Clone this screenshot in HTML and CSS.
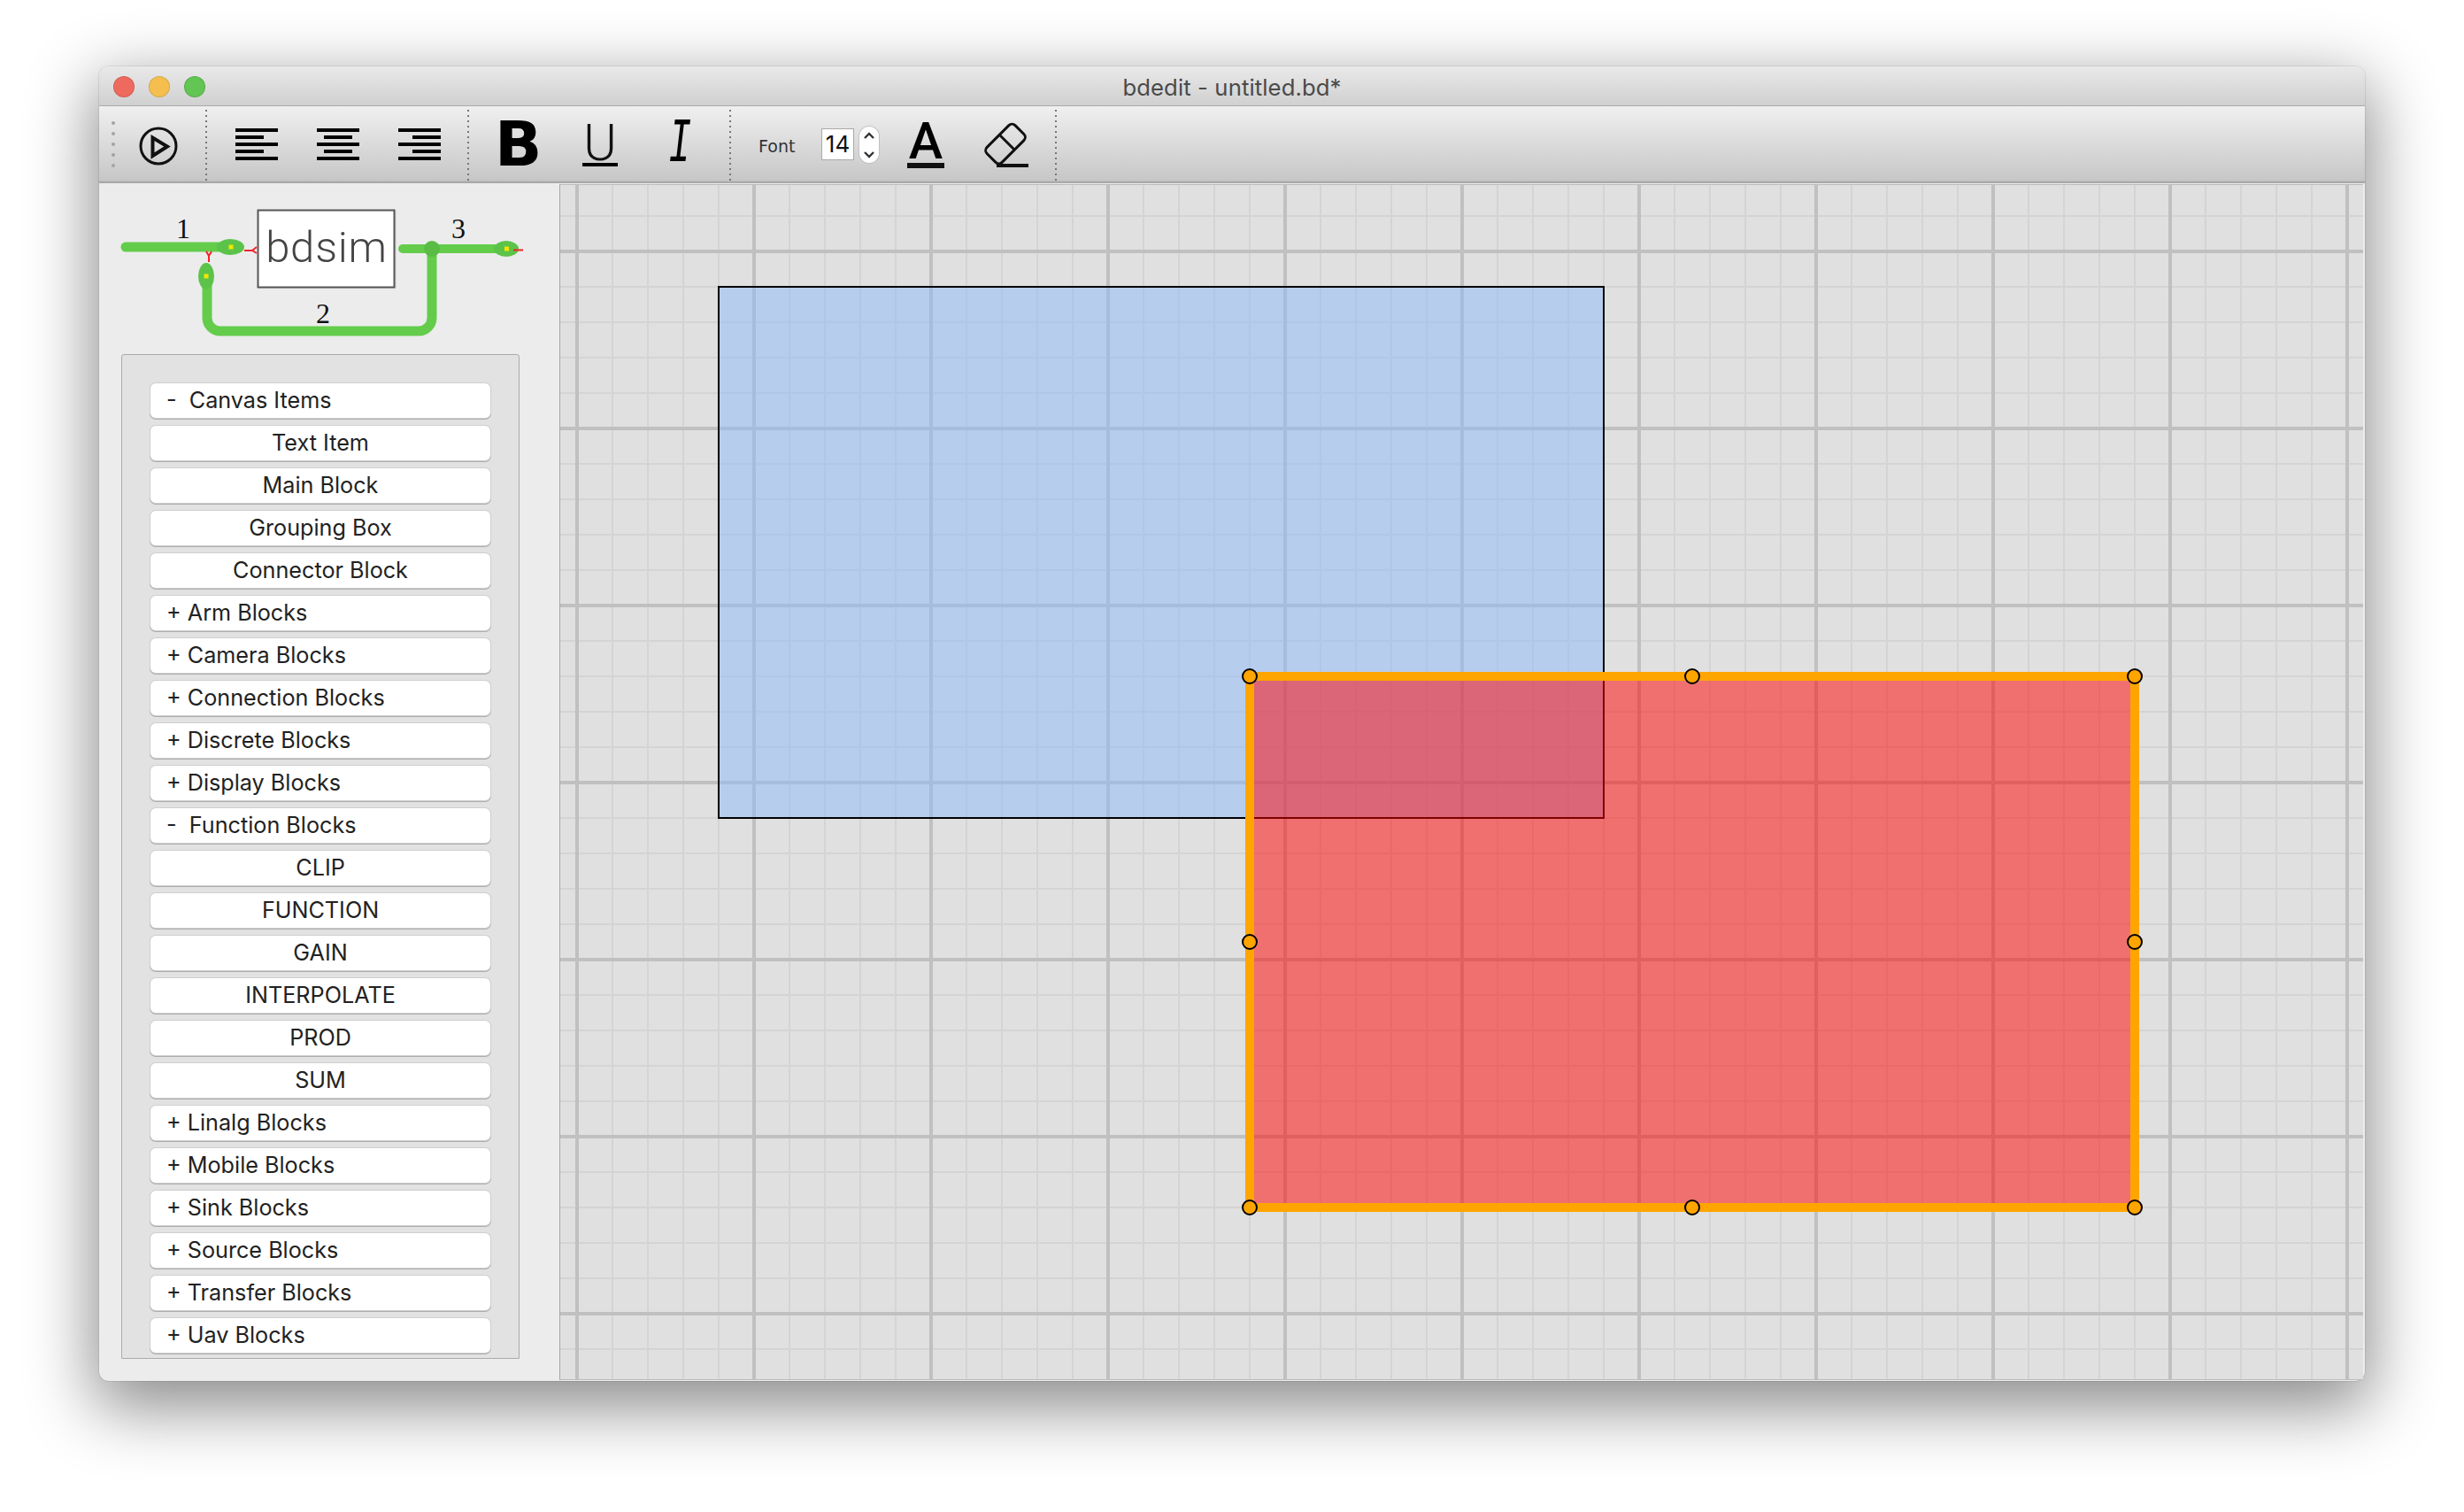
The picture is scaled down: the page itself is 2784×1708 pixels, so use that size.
FILE: index.html
```html
<!DOCTYPE html>
<html lang="en">
<head>
<meta charset="utf-8">
<title>bdedit - untitled.bd*</title>
<link rel="stylesheet" href="styles.css">
</head>
<body>
<div class="window">
  <header class="titlebar">
    <div class="lights"><i class="light red"></i><i class="light yellow"></i><i class="light green"></i></div>
    <div class="title">bdedit - untitled.bd*</div>
  </header>
  <div class="toolbar">
    <div class="group g1">
      <div class="handle"><i></i><i></i><i></i><i></i><i></i></div>
      <svg class="play" viewBox="0 0 44 44" width="44" height="44"><circle cx="22" cy="22" r="20" fill="none" stroke="#111" stroke-width="3"/><path d="M15.5 12.5V33L32 22.5Z" fill="none" stroke="#111" stroke-width="4" stroke-linejoin="miter"/></svg>
    </div>
    <i class="sep"></i>
    <div class="group g2">
      <svg class="align" viewBox="0 0 48 36" width="48" height="36"><path d="M0 0h48v4H0zM0 8h32v4H0zM0 16h48v4H0zM0 24h32v4H0zM0 32h48v4H0z"/></svg>
      <svg class="align" viewBox="0 0 48 36" width="48" height="36"><path d="M0 0h48v4H0zM8 8h32v4H8zM0 16h48v4H0zM8 24h32v4H8zM0 32h48v4H0z"/></svg>
      <svg class="align" viewBox="0 0 48 36" width="48" height="36"><path d="M0 0h48v4H0zM16 8h32v4H16zM0 16h48v4H0zM16 24h32v4H16zM0 32h48v4H0z"/></svg>
    </div>
    <i class="sep"></i>
    <div class="group g3">
      <span class="fmt-b">B</span>
      <span class="fmt-u"><b>U</b><i class="bar"></i></span>
      <span class="fmt-i">I</span>
    </div>
    <i class="sep"></i>
    <div class="group g4">
      <span class="font-label">Font</span>
      <span class="spin-input">14</span>
      <span class="stepper">
        <svg viewBox="0 0 22 41" width="22" height="41"><path d="M6 13l5-5 5 5M6 29l5 5 5-5" fill="none" stroke="#333" stroke-width="2.4"/></svg>
      </span>
      <span class="fmt-a"><b>A</b><i class="bar"></i></span>
      <svg class="eraser" viewBox="0 0 56 56" width="56" height="56"><g transform="rotate(-45 28 27.5)" fill="none" stroke="#111" stroke-width="3"><rect x="5.5" y="15.5" width="45" height="24" rx="5"/><path d="M30.5 15.5v24"/></g><path d="M18 50h36v4H18z" fill="#111"/></svg>
    </div>
    <i class="sep"></i>
  </div>
  <div class="main">
    <aside class="sidebar">
      <svg class="logo" viewBox="0 0 520 193" width="520" height="193">
        <rect x="181" y="31" width="155" height="88" fill="#dcdcdc"/>
        <rect x="179.500" y="30.500" width="154" height="87" fill="#fff" stroke="#555" stroke-width="2"/>
        <text class="logo-name" x="257" y="89" text-anchor="middle">bdsim</text>
        <g fill="none" stroke="#63cc4b" stroke-linecap="round">
          <path d="M30 72H140" stroke-width="11"/>
          <path d="M343 74H460" stroke-width="10"/>
          <path d="M376 74V152a15 15 0 0 1-15 15H137a15 15 0 0 1-15-15V115" stroke-width="11"/>
        </g>
        <circle cx="376" cy="74" r="9" fill="#59bc45"/>
        <ellipse cx="148.500" cy="72" rx="15.500" ry="9" fill="#5cc34a"/>
        <ellipse cx="460" cy="74" rx="14" ry="9" fill="#5cc34a"/>
        <ellipse cx="121" cy="105" rx="9" ry="15" fill="#5cc34a"/>
        <rect x="146.500" y="69.500" width="5" height="5" fill="#f2e600"/>
        <rect x="458" y="71.500" width="5" height="5" fill="#f2e600"/>
        <rect x="118.500" y="102.500" width="5" height="5" fill="#f2e600"/>
        <g fill="none" stroke="#f4222a" stroke-width="2">
          <path d="M164 76h9l5-4M173 76l5 3"/>
          <path d="M468 75.500h11"/>
          <path d="M124 89v-7l-3-5M124 82l3-5"/>
        </g>
        <text class="logo-num" x="95" y="62" text-anchor="middle">1</text>
        <text class="logo-num" x="406" y="62" text-anchor="middle">3</text>
        <text class="logo-num" x="253" y="158" text-anchor="middle">2</text>
      </svg>
      <div class="panel">
        <div class="btn left">-  Canvas Items</div>
        <div class="btn">Text Item</div>
        <div class="btn">Main Block</div>
        <div class="btn">Grouping Box</div>
        <div class="btn">Connector Block</div>
        <div class="btn left">+ Arm Blocks</div>
        <div class="btn left">+ Camera Blocks</div>
        <div class="btn left">+ Connection Blocks</div>
        <div class="btn left">+ Discrete Blocks</div>
        <div class="btn left">+ Display Blocks</div>
        <div class="btn left">-  Function Blocks</div>
        <div class="btn">CLIP</div>
        <div class="btn">FUNCTION</div>
        <div class="btn">GAIN</div>
        <div class="btn">INTERPOLATE</div>
        <div class="btn">PROD</div>
        <div class="btn">SUM</div>
        <div class="btn left">+ Linalg Blocks</div>
        <div class="btn left">+ Mobile Blocks</div>
        <div class="btn left">+ Sink Blocks</div>
        <div class="btn left">+ Source Blocks</div>
        <div class="btn left">+ Transfer Blocks</div>
        <div class="btn left">+ Uav Blocks</div>
      </div>
    </aside>
    <section class="canvas">
      <div class="box-blue"></div>
      <div class="box-red">
        <i class="grip nw"></i><i class="grip n"></i><i class="grip ne"></i>
        <i class="grip w"></i><i class="grip e"></i>
        <i class="grip sw"></i><i class="grip s"></i><i class="grip se"></i>
      </div>
    </section>
  </div>
</div>
</body>
</html>
```
FILE: styles.css
```css
* { box-sizing: border-box; }
html, body { margin: 0; height: 100%; background: #fff; overflow: hidden; }
body { padding: 75px 112px 0; font-family: Inter, "Liberation Sans", sans-serif; color: #222; }
i { font-style: normal; display: block; }

.window {
  width: 2560px;
  height: 1485px;
  display: flex;
  flex-direction: column;
  background: #ececec;
  border-radius: 11px;
  box-shadow: 0 24px 76px 6px rgba(0,0,0,.46), 0 0 0 1px rgba(0,0,0,.08);
  overflow: visible;
}

.titlebar {
  position: relative;
  height: 45px;
  flex: none;
  display: flex;
  align-items: center;
  justify-content: center;
  background: linear-gradient(#e9e9e9, #d0d0d0);
  border-bottom: 1px solid #aaa;
  border-radius: 11px 11px 0 0;
}
.lights { position: absolute; left: 16px; top: 11px; display: flex; gap: 16px; }
.light { width: 24px; height: 24px; border-radius: 50%; border: 1px solid rgba(0,0,0,.12); }
.red { background: #ee6a5f; }
.yellow { background: #f5bf4f; }
.green { background: #62c554; }
.title { font-size: 25.7px; color: #4a4a4a; letter-spacing: .1px; padding-top: 2px; }

.toolbar {
  height: 87px;
  flex: none;
  display: flex;
  align-items: center;
  background: linear-gradient(#f0f0f0, #c6c6c6);
  border-bottom: 2px solid #a9a9a9;
  box-shadow: inset 0 -1px 0 #bdbdbd;
}
.group { height: 100%; display: flex; align-items: center; flex: none; }
.sep {
  width: 2px;
  flex: none;
  align-self: stretch;
  margin: 4px 0 1px;
  background: repeating-linear-gradient(#777 0 2px, transparent 2px 6px);
}
.g1 { width: 120px; padding-left: 14px; }
.handle { display: flex; flex-direction: column; gap: 8px; }
.handle i { width: 4px; height: 4px; border-radius: 50%; background: #a3a3a3; }
.play { margin: 5px 0 0 27px; }
.g2 { width: 294px; padding-left: 32px; gap: 44px; }
.g3 { width: 294px; padding-left: 34px; }
.g4 { width: 366px; padding-left: 31px; }

.fmt-b {
  width: 45px;
  height: 60px;
  font: bold 70px/60px "DejaVu Sans", sans-serif;
  color: #000;
  margin: 1px 0 0 -5px;
}
.fmt-u, .fmt-a { display: flex; flex-direction: column; align-items: center; }
.fmt-u { width: 40px; margin: 3px 0 0 54px; }
.fmt-u b { font: 300 57px/44px Roboto, sans-serif; height: 44px; color: #111; }
.bar { background: #000; width: 100%; }
.fmt-u .bar { height: 4px; }
.fmt-i {
  width: 28px;
  margin: 2px 0 0 56px;
  font: italic 400 70px/48px "Liberation Mono", monospace;
  text-align: center;
  color: #000;
  display: flex;
  justify-content: center;
  transform: scaleX(.62);
}
.font-label { width: 42px; font: 19px/1 "DejaVu Sans", sans-serif; color: #333; margin-top: 5px; white-space: nowrap; }
.spin-input {
  width: 37px;
  height: 36px;
  margin-left: 29px;
  background: #fff;
  border: 1px solid #aaa;
  font-size: 26px;
  line-height: 34px;
  text-align: center;
  color: #111;
  margin-top: 1px;
}
.stepper {
  width: 22px;
  height: 41px;
  margin-left: 6px;
  background: #fff;
  border-radius: 11px;
  box-shadow: 0 0 0 1px #c2c2c2;
  overflow: hidden;
  margin-top: 1px;
}
.stepper svg { display: block; }
.fmt-a { width: 42px; margin: 3px 0 0 32px; }
.fmt-a b { font: 500 58px/42px Roboto, sans-serif; height: 46px; color: #000; }
.fmt-a .bar { height: 6px; background: #111; }
.eraser { margin-left: 41px; }

.main { flex: 1; display: flex; min-height: 0; }
.sidebar { width: 520px; flex: none; display: flex; flex-direction: column; }
.logo { display: block; flex: none; }
.logo-name { font: 300 49px Roboto, sans-serif; fill: #444; letter-spacing: .8px; }
.logo-num { font: 32px "Liberation Serif", serif; fill: #111; }
.panel {
  width: 450px;
  height: 1135px;
  margin-left: 25px;
  padding: 32px 32px 0;
  display: flex;
  flex-direction: column;
  gap: 9px;
  background: #e2e2e2;
  border: 1px solid #ababab;
  border-radius: 3px 3px 0 0;
}
.btn {
  height: 39px;
  flex: none;
  padding-top: 1px;
  background: #fff;
  border-radius: 6px;
  box-shadow: 0 0 0 1px #cfcfcf, 0 1px 0 1px #adadad;
  font-size: 25.2px;
  line-height: 37px;
  text-align: center;
  color: #222;
  white-space: pre;
}
.btn.left { text-align: left; padding-left: 18px; }

.canvas {
  position: relative;
  flex: none;
  width: 2038px;
  height: 1351px;
  margin-top: 1px;
  background-color: #e0e0e0;
  border-left: 1px solid #a6a6a6;
  border-top: 1px solid #bbb;
  border-bottom: 1px solid #bbb;
  overflow: hidden;
  background-image:
    linear-gradient(to right, #c0c0c0 4px, transparent 4px),
    linear-gradient(to bottom, #c0c0c0 4px, transparent 4px),
    linear-gradient(to right, #d4d4d4 2px, transparent 2px),
    linear-gradient(to bottom, #d4d4d4 2px, transparent 2px);
  background-size: 200px 100%, 100% 200px, 40px 100%, 100% 40px;
  background-position: 17px 0, 0 73px, 18px 0, 0 34px;
}
.box-blue {
  position: absolute;
  left: 178px;
  top: 114px;
  width: 1002px;
  height: 602px;
  border: 2px solid #000;
  background: rgba(142,186,252,.5);
}
.box-red {
  position: absolute;
  left: 774px;
  top: 550px;
  width: 1010px;
  height: 610px;
  border: 10px solid #ffa500;
  background: rgba(255,0,0,.5);
  background-clip: padding-box;
}
.grip {
  position: absolute;
  width: 18px;
  height: 18px;
  border-radius: 50%;
  border: 2px solid #000;
  background: #ffa500;
}
.nw, .n, .ne { top: -14px; }
.sw, .s, .se { bottom: -14px; }
.w, .e { top: calc(50% - 9px); }
.nw, .w, .sw { left: -14px; }
.ne, .e, .se { right: -14px; }
.n, .s { left: calc(50% - 9px); }
```
